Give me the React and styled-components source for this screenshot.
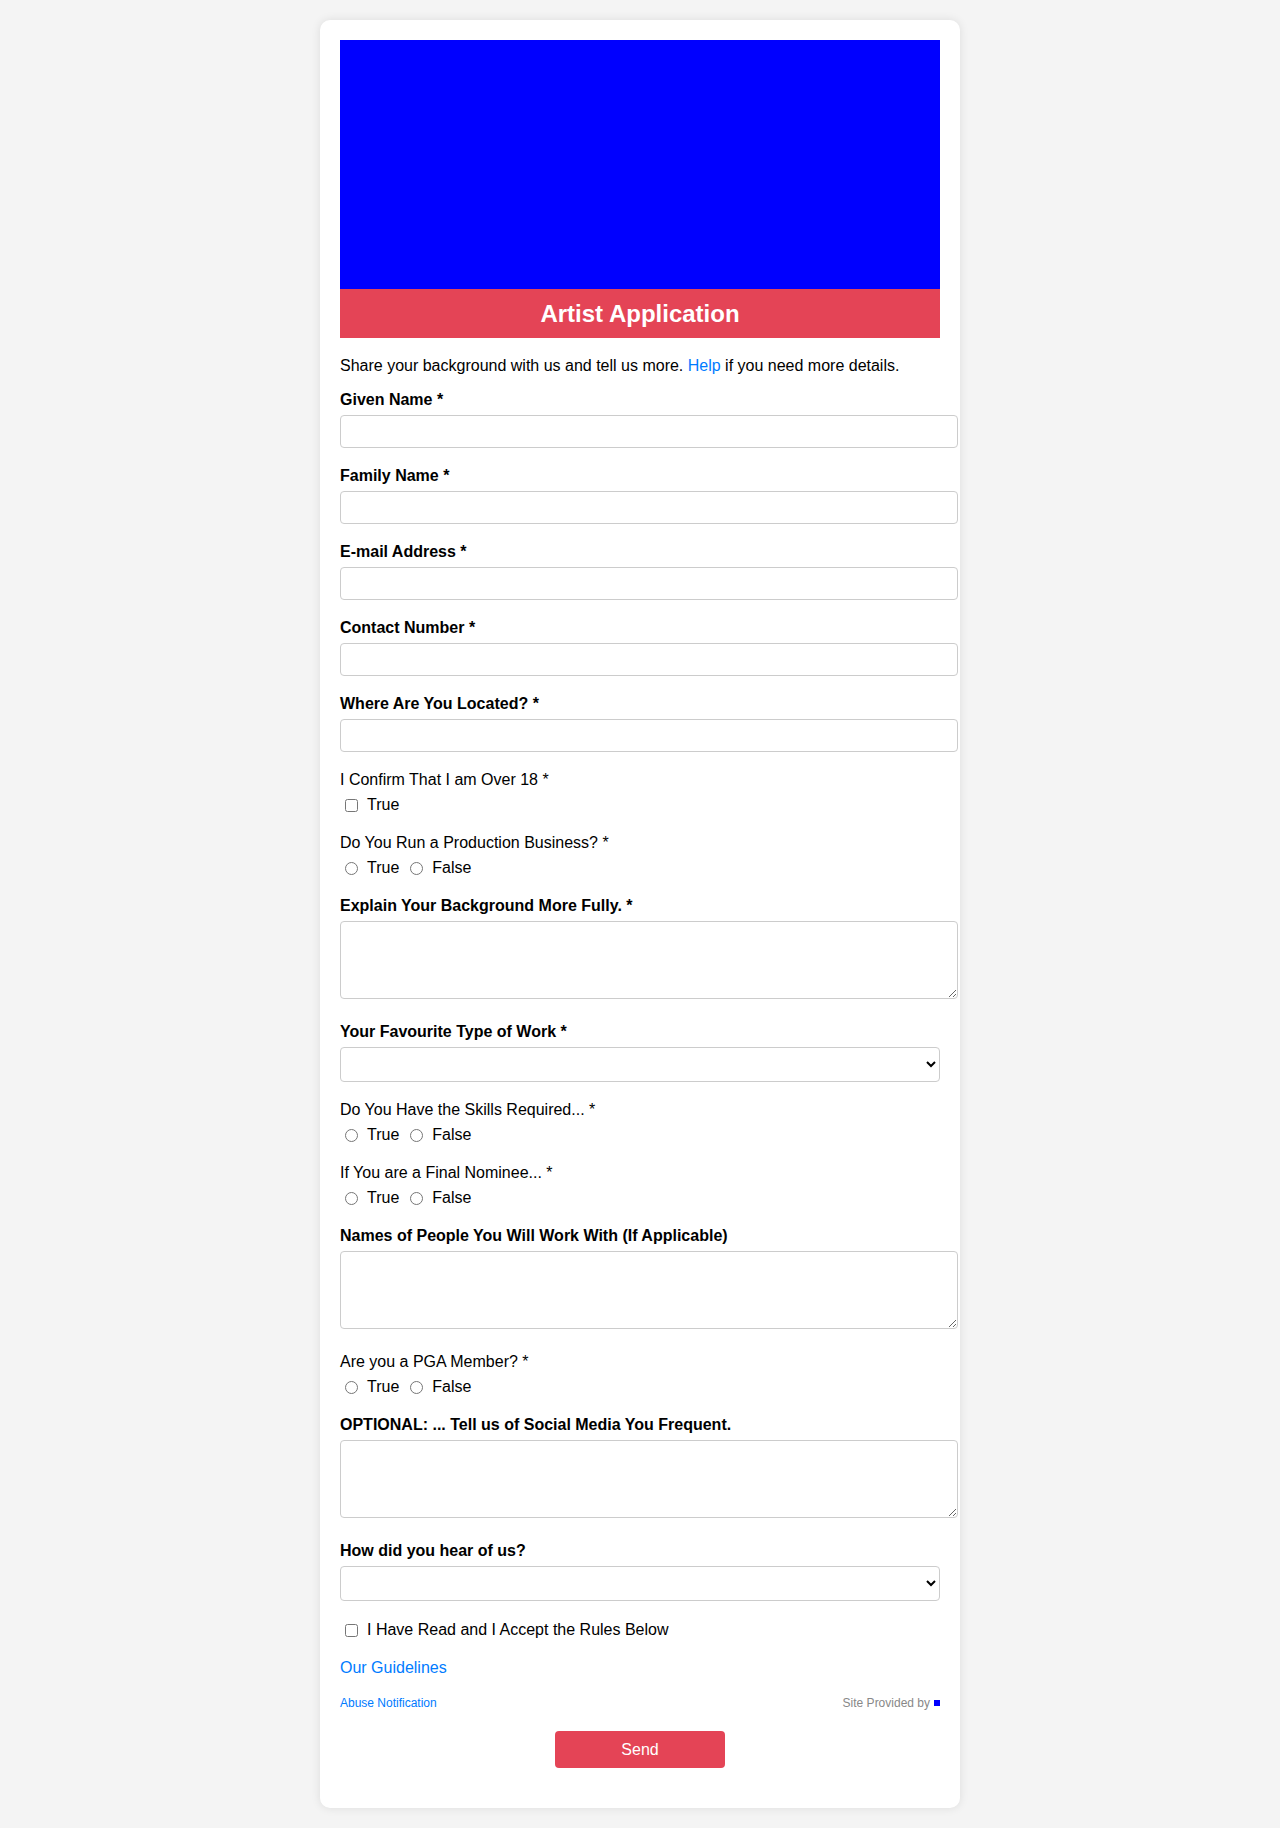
import React from "react";
import styled, { createGlobalStyle } from "styled-components";

const GlobalStyle = createGlobalStyle`
  body {
    margin: 0;
    background: #f4f4f4;
    font-family: "Liberation Sans", Arial, sans-serif;
    color: #000;
  }
`;

const Page = styled.div`
  padding: 20px 0 21px;
`;

const Card = styled.div`
  box-sizing: border-box;
  width: 640px;
  margin: 0 auto;
  padding: 20px 20px 20px;
  background: #fff;
  border-radius: 10px;
  box-shadow: 0 0 10px rgba(0, 0, 0, 0.1);
`;

const Banner = styled.div`
  height: 249px;
  background: #0000ff;
`;

const TitleBar = styled.h1`
  margin: 0;
  padding: 11px 0 10px;
  background: #e44456;
  color: #fff;
  font-size: 24px;
  line-height: 28px;
  font-weight: bold;
  text-align: center;
`;

const Intro = styled.p`
  margin: 19px 0 16px;
  font-size: 16px;
`;

const Link = styled.a`
  color: #007bff;
  text-decoration: none;
`;

const Group = styled.div`
  margin-bottom: ${(p) => p.gap || 19}px;
`;

const Label = styled.label`
  display: block;
  margin-bottom: 6px;
  font-size: 16px;
  font-weight: ${(p) => (p.plain ? "normal" : "bold")};
`;

const Input = styled.input`
  display: block;
  width: 100%;
  height: 31px;
  padding: 0 8px;
  border: 1px solid #ccc;
  border-radius: 4px;
  font-size: 14px;
  font-family: inherit;
`;

const TextArea = styled.textarea`
  display: block;
  width: 100%;
  height: 60px;
  padding: 8px;
  border: 1px solid #ccc;
  border-radius: 4px;
  font-size: 14px;
  font-family: inherit;
`;

const Select = styled.select`
  display: block;
  box-sizing: border-box;
  width: 100%;
  height: 35px;
  padding: 0 8px;
  border: 1px solid #ccc;
  border-radius: 4px;
  background: #fff;
  font-size: 14px;
  font-family: inherit;
`;

const OptionRow = styled.div`
  height: 20px;
  display: flex;
  align-items: center;
  font-size: 16px;
`;

const Choice = styled.label`
  display: inline-flex;
  align-items: center;
  margin-right: 6px;

  input {
    margin: 0 9px 0 5px;
  }
`;

const Guidelines = styled.div`
  margin-bottom: 19px;
  font-size: 16px;
`;

const Footer = styled.div`
  display: flex;
  justify-content: space-between;
  align-items: center;
  font-size: 12px;
  line-height: 14px;
`;

const Credit = styled.span`
  color: #888;
  display: inline-flex;
  align-items: center;
`;

const Dot = styled.span`
  display: inline-block;
  width: 6px;
  height: 6px;
  margin-left: 4px;
  background: #0000ff;
`;

const Actions = styled.div`
  display: flex;
  justify-content: center;
  margin: 21px 0 20px;
`;

const Button = styled.button`
  width: 170px;
  height: 37px;
  border: none;
  border-radius: 4px;
  background: #e44456;
  color: #fff;
  font-size: 16px;
  font-family: inherit;
  cursor: pointer;
`;

const TextField = ({ label, id }) => (
  <Group>
    <Label htmlFor={id}>{label}</Label>
    <Input id={id} type="text" />
  </Group>
);

const AreaField = ({ label, id }) => (
  <Group gap={24}>
    <Label htmlFor={id}>{label}</Label>
    <TextArea id={id} />
  </Group>
);

const SelectField = ({ label, id }) => (
  <Group>
    <Label htmlFor={id}>{label}</Label>
    <Select id={id}>
      <option value=""></option>
    </Select>
  </Group>
);

const BoolField = ({ label, name }) => (
  <Group>
    <Label plain>{label}</Label>
    <OptionRow>
      <Choice>
        <input type="radio" name={name} value="true" />
        True
      </Choice>
      <Choice>
        <input type="radio" name={name} value="false" />
        False
      </Choice>
    </OptionRow>
  </Group>
);

export default function App() {
  return (
    <Page>
      <GlobalStyle />
      <Card>
        <Banner />
        <TitleBar>Artist Application</TitleBar>
        <Intro>
          Share your background with us and tell us more. <Link href="#">Help</Link> if
          you need more details.
        </Intro>
        <form onSubmit={(e) => e.preventDefault()}>
          <TextField label="Given Name *" id="givenName" />
          <TextField label="Family Name *" id="familyName" />
          <TextField label="E-mail Address *" id="email" />
          <TextField label="Contact Number *" id="phone" />
          <TextField label="Where Are You Located? *" id="location" />
          <Group>
            <Label plain>I Confirm That I am Over 18 *</Label>
            <OptionRow>
              <Choice>
                <input type="checkbox" name="over18" />
                True
              </Choice>
            </OptionRow>
          </Group>
          <BoolField label="Do You Run a Production Business? *" name="business" />
          <AreaField label="Explain Your Background More Fully. *" id="background" />
          <SelectField label="Your Favourite Type of Work *" id="workType" />
          <BoolField label="Do You Have the Skills Required... *" name="skills" />
          <BoolField label="If You are a Final Nominee... *" name="nominee" />
          <AreaField label="Names of People You Will Work With (If Applicable)" id="people" />
          <BoolField label="Are you a PGA Member? *" name="pga" />
          <AreaField label="OPTIONAL: ... Tell us of Social Media You Frequent." id="social" />
          <SelectField label="How did you hear of us?" id="source" />
          <Group>
            <OptionRow>
              <Choice>
                <input type="checkbox" name="rules" />
                I Have Read and I Accept the Rules Below
              </Choice>
            </OptionRow>
          </Group>
          <Guidelines>
            <Link href="#">Our Guidelines</Link>
          </Guidelines>
          <Footer>
            <Link href="#">Abuse Notification</Link>
            <Credit>
              Site Provided by <Dot />
            </Credit>
          </Footer>
          <Actions>
            <Button type="submit">Send</Button>
          </Actions>
        </form>
      </Card>
    </Page>
  );
}
